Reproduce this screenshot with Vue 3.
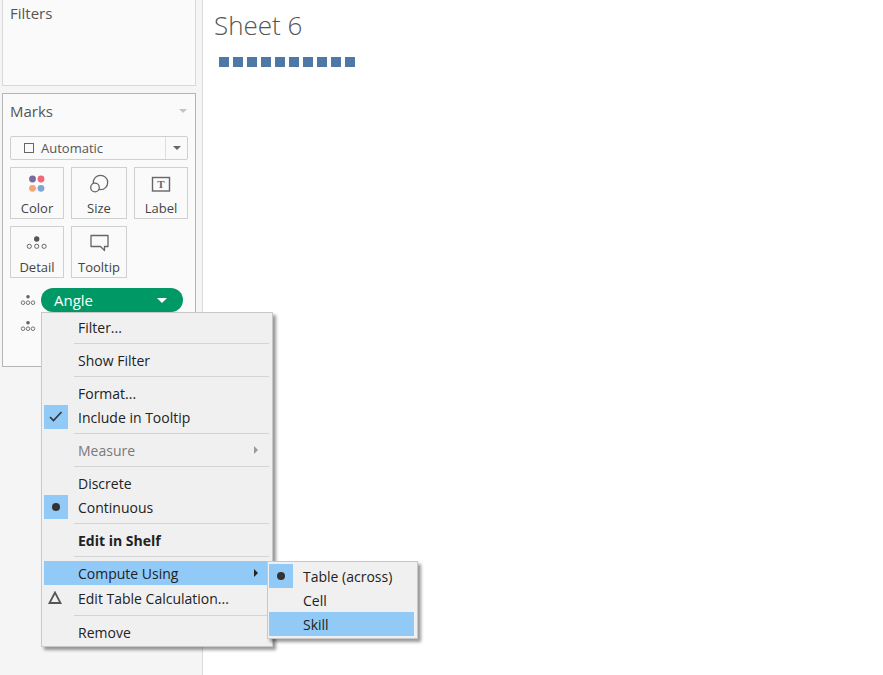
<script setup>
const dots = [0, 1, 2]
const menu = [
  { t: 'Filter...' },
  { sep: true },
  { t: 'Show Filter' },
  { sep: true },
  { t: 'Format...' },
  { t: 'Include in Tooltip', icon: 'check' },
  { sep: true },
  { t: 'Measure', disabled: true, arrow: true },
  { sep: true },
  { t: 'Discrete' },
  { t: 'Continuous', icon: 'dot' },
  { sep: true },
  { t: 'Edit in Shelf', bold: true },
  { sep: true },
  { t: 'Compute Using', active: true, arrow: true },
  { t: 'Edit Table Calculation...', icon: 'delta', spaced: true },
  { sep: true },
  { t: 'Remove' },
]
</script>

<template>
  <div class="app">
    <aside class="side">
      <section class="card filters"><h2 class="title">Filters</h2></section>
      <section class="card marks">
        <div class="marks-head">
          <h2 class="title">Marks</h2>
          <span class="caret light"></span>
        </div>
        <div class="select">
          <span class="select-main"><span class="square"></span>Automatic</span>
          <span class="select-arrow"><span class="caret dark"></span></span>
        </div>
        <div class="grid">
          <div class="tile">
            <svg class="ico" width="24" height="24" viewBox="0 0 24 24">
              <circle cx="7.5" cy="7" r="3.4" fill="#7b6b9c" />
              <circle cx="16" cy="7" r="3.4" fill="#f0677e" />
              <circle cx="7.5" cy="16.3" r="3.4" fill="#f2a67a" />
              <circle cx="16" cy="16.3" r="3.4" fill="#7ea6d3" />
            </svg>
            <span>Color</span>
          </div>
          <div class="tile">
            <svg class="ico" width="24" height="24" viewBox="0 0 24 24" fill="none" stroke="#666" stroke-width="1.3">
              <circle cx="13.5" cy="10.5" r="7.2" />
              <circle cx="8" cy="15.5" r="4.3" fill="#fafafa" />
            </svg>
            <span>Size</span>
          </div>
          <div class="tile">
            <svg class="ico" width="24" height="24" viewBox="0 0 24 24">
              <rect x="3.5" y="5.5" width="17" height="13.5" fill="none" stroke="#666" stroke-width="1.4" />
              <text x="12" y="16" text-anchor="middle" class="t-glyph">T</text>
            </svg>
            <span>Label</span>
          </div>
          <div class="tile">
            <svg class="ico" width="24" height="24" viewBox="0 0 24 24" fill="none" stroke="#666" stroke-width="1">
              <circle cx="11.7" cy="8" r="2.7" fill="#555" stroke="none" />
              <circle cx="4.3" cy="15.3" r="2.1" />
              <circle cx="11.7" cy="15.3" r="2.1" />
              <circle cx="19.1" cy="15.3" r="2.1" />
            </svg>
            <span>Detail</span>
          </div>
          <div class="tile">
            <svg class="ico" width="24" height="24" viewBox="0 0 24 24" fill="none" stroke="#666" stroke-width="1.3">
              <path d="M4 4.5h17v11h-3.5v4l-4-4h-9.5z" stroke-linejoin="round" />
            </svg>
            <span>Tooltip</span>
          </div>
        </div>
        <div class="pill-row">
          <svg class="mini" width="16" height="14" viewBox="0 0 16 14" fill="none" stroke="#666" stroke-width="0.9">
            <circle cx="10" cy="3.7" r="1.8" fill="#666" stroke="none" />
            <circle v-for="d in dots" :key="d" :cx="5 + d * 5" cy="9.7" r="1.8" />
          </svg>
          <div class="pill"><span>Angle</span><span class="caret white"></span></div>
        </div>
        <div class="pill-row second">
          <svg class="mini" width="16" height="14" viewBox="0 0 16 14" fill="none" stroke="#666" stroke-width="0.9">
            <circle cx="10" cy="3.7" r="1.8" fill="#666" stroke="none" />
            <circle v-for="d in dots" :key="d" :cx="5 + d * 5" cy="9.7" r="1.8" />
          </svg>
        </div>
      </section>
    </aside>

    <main class="sheet">
      <h1 class="sheet-title">Sheet 6</h1>
      <div class="squares"><span v-for="n in 10" :key="n" class="sq"></span></div>
    </main>

    <div class="menu">
      <template v-for="(m, i) in menu" :key="i">
        <div v-if="m.sep" class="sep"></div>
        <div v-else class="row" :class="{ active: m.active, disabled: m.disabled, bold: m.bold, spaced: m.spaced }">
          <span class="gut" :class="{ on: m.icon === 'check' || m.icon === 'dot' }">
            <svg v-if="m.icon === 'check'" width="14" height="12" viewBox="0 0 14 12" fill="none" stroke="#333" stroke-width="1.6"><path d="M1 6l3.5 3.5 8-8.5" /></svg>
            <span v-if="m.icon === 'dot'" class="dot"></span>
            <svg v-if="m.icon === 'delta'" width="16" height="14" viewBox="0 0 16 14" fill="none" stroke="#555" stroke-width="1.8"><path d="M7 1.5L1.5 12h11z" /></svg>
          </span>
          <span class="label">{{ m.t }}</span>
          <span v-if="m.arrow" class="arrow"></span>
        </div>
      </template>
    </div>

    <div class="submenu">
      <div class="row"><span class="gut on"><span class="dot"></span></span><span class="label">Table (across)</span></div>
      <div class="row"><span class="gut"></span><span class="label">Cell</span></div>
      <div class="row active"><span class="gut"></span><span class="label">Skill</span></div>
    </div>
  </div>
</template>

<style>
html, body { margin: 0; background: #fff; }
</style>

<style scoped>
.app {
  position: relative;
  display: flex;
  width: 883px;
  height: 675px;
  overflow: hidden;
  background: #fff;
  font-family: "Open Sans", "Noto Sans", sans-serif;
  color: #333;
}
.side {
  box-sizing: border-box;
  width: 203px;
  flex: none;
  padding: 0 6px 0 2px;
  background: #f5f5f5;
  border-right: 1px solid #dcdcdc;
  display: flex;
  flex-direction: column;
  gap: 7px;
}
.card {
  box-sizing: border-box;
  background: #fafafa;
  border: 1px solid #d0d0d0;
  padding: 0 7px;
}
.filters { height: 87px; margin-top: -1px; border-color: #d9d9d9; }
.marks { height: 274px; border-color: #b5b5b5; }
.title {
  margin: 0;
  font-size: 15px;
  font-weight: 400;
  line-height: 20px;
  color: #555;
}
.filters .title { padding-top: 3px; }
.marks-head {
  box-sizing: border-box;
  height: 42px;
  padding: 0 1px 8px 0;
  display: flex;
  align-items: center;
  justify-content: space-between;
}
.caret { width: 0; height: 0; border-left: 4px solid transparent; border-right: 4px solid transparent; }
.caret.light { border-top: 4px solid #c4c4c4; }
.caret.dark { border-top: 4px solid #666; }
.caret.white { border-left-width: 5px; border-right-width: 5px; border-top: 5px solid #fff; margin-right: 16px; }
.select {
  box-sizing: border-box;
  display: flex;
  width: 178px;
  height: 24px;
  background: #fafafa;
  border: 1px solid #cfcfcf;
  border-radius: 2px;
}
.select-main {
  flex: 1;
  display: flex;
  align-items: center;
  gap: 7px;
  padding-left: 13px;
  font-size: 13px;
  color: #555;
  border-right: 1px solid #dedede;
}
.square { width: 8px; height: 8px; border: 1px solid #666; }
.select-arrow { width: 21px; display: flex; align-items: center; justify-content: center; }
.grid {
  display: grid;
  grid-template-columns: 54px 56px 54px;
  grid-auto-rows: 52px;
  column-gap: 7px;
  row-gap: 7px;
  margin-top: 7px;
}
.tile {
  box-sizing: border-box;
  border: 1px solid #d0d0d0;
  display: flex;
  flex-direction: column;
  align-items: center;
  font-size: 13px;
  line-height: 17px;
  color: #444;
  padding-top: 4px;
}
.ico { display: block; margin-bottom: 4px; }
.t-glyph { font-family: "Liberation Serif", serif; font-size: 11px; font-weight: 700; fill: #666; }
.pill-row {
  display: flex;
  align-items: center;
  gap: 7px;
  height: 24px;
  margin-top: 10px;
  padding-left: 8px;
}
.pill-row.second { margin-top: 2px; }
.mini { flex: none; overflow: visible; }
.pill {
  flex: none;
  box-sizing: border-box;
  width: 142px;
  height: 24px;
  border-radius: 12px;
  background: #009966;
  color: #fff;
  font-size: 15px;
  font-weight: 500;
  display: flex;
  align-items: center;
  justify-content: space-between;
  padding-left: 13px;
}
.sheet { flex: 1; padding: 9px 0 0 11px; }
.sheet-title {
  margin: 0;
  font-size: 26px;
  font-weight: 300;
  line-height: 32px;
  color: #555;
}
.squares { display: flex; gap: 4px; margin: 16px 0 0 5px; }
.sq { width: 10px; height: 10px; background: #4e79a7; }
.menu, .submenu {
  position: absolute;
  box-sizing: border-box;
  background: #f0f0f0;
  border: 1px solid #c8c8c8;
  box-shadow: 3px 3px 3px rgba(0, 0, 0, 0.4);
  font-size: 14px;
  color: #222;
}
.menu { left: 41px; top: 312px; width: 232px; height: 335px; padding: 2px; }
.submenu { left: 267px; top: 561px; width: 151px; height: 78px; padding: 2px 3px 2px 1px; }
.row { display: flex; align-items: center; height: 24px; position: relative; }
.row.spaced { margin-top: 1px; height: 25px; align-items: flex-start; }
.row .label { white-space: nowrap; margin-left: 10px; padding-top: 2px; line-height: 22px; }
.gut { width: 24px; height: 24px; flex: none; display: flex; align-items: center; justify-content: center; }
.gut.on { background: #91c9f7; }
.row.active { background: #91c9f7; }
.row.disabled { color: #7a7a7a; }
.row.bold { font-weight: 700; }
.dot { width: 8px; height: 8px; border-radius: 50%; background: #333; }
.sep { height: 1px; background: #d4d4d4; margin: 4px 1px 4px 30px; }
.arrow {
  position: absolute;
  right: 12px;
  top: 8px;
  border-left: 4px solid #222;
  border-top: 4px solid transparent;
  border-bottom: 4px solid transparent;
}
.row.disabled .arrow { border-left-color: #9a9a9a; }
</style>
